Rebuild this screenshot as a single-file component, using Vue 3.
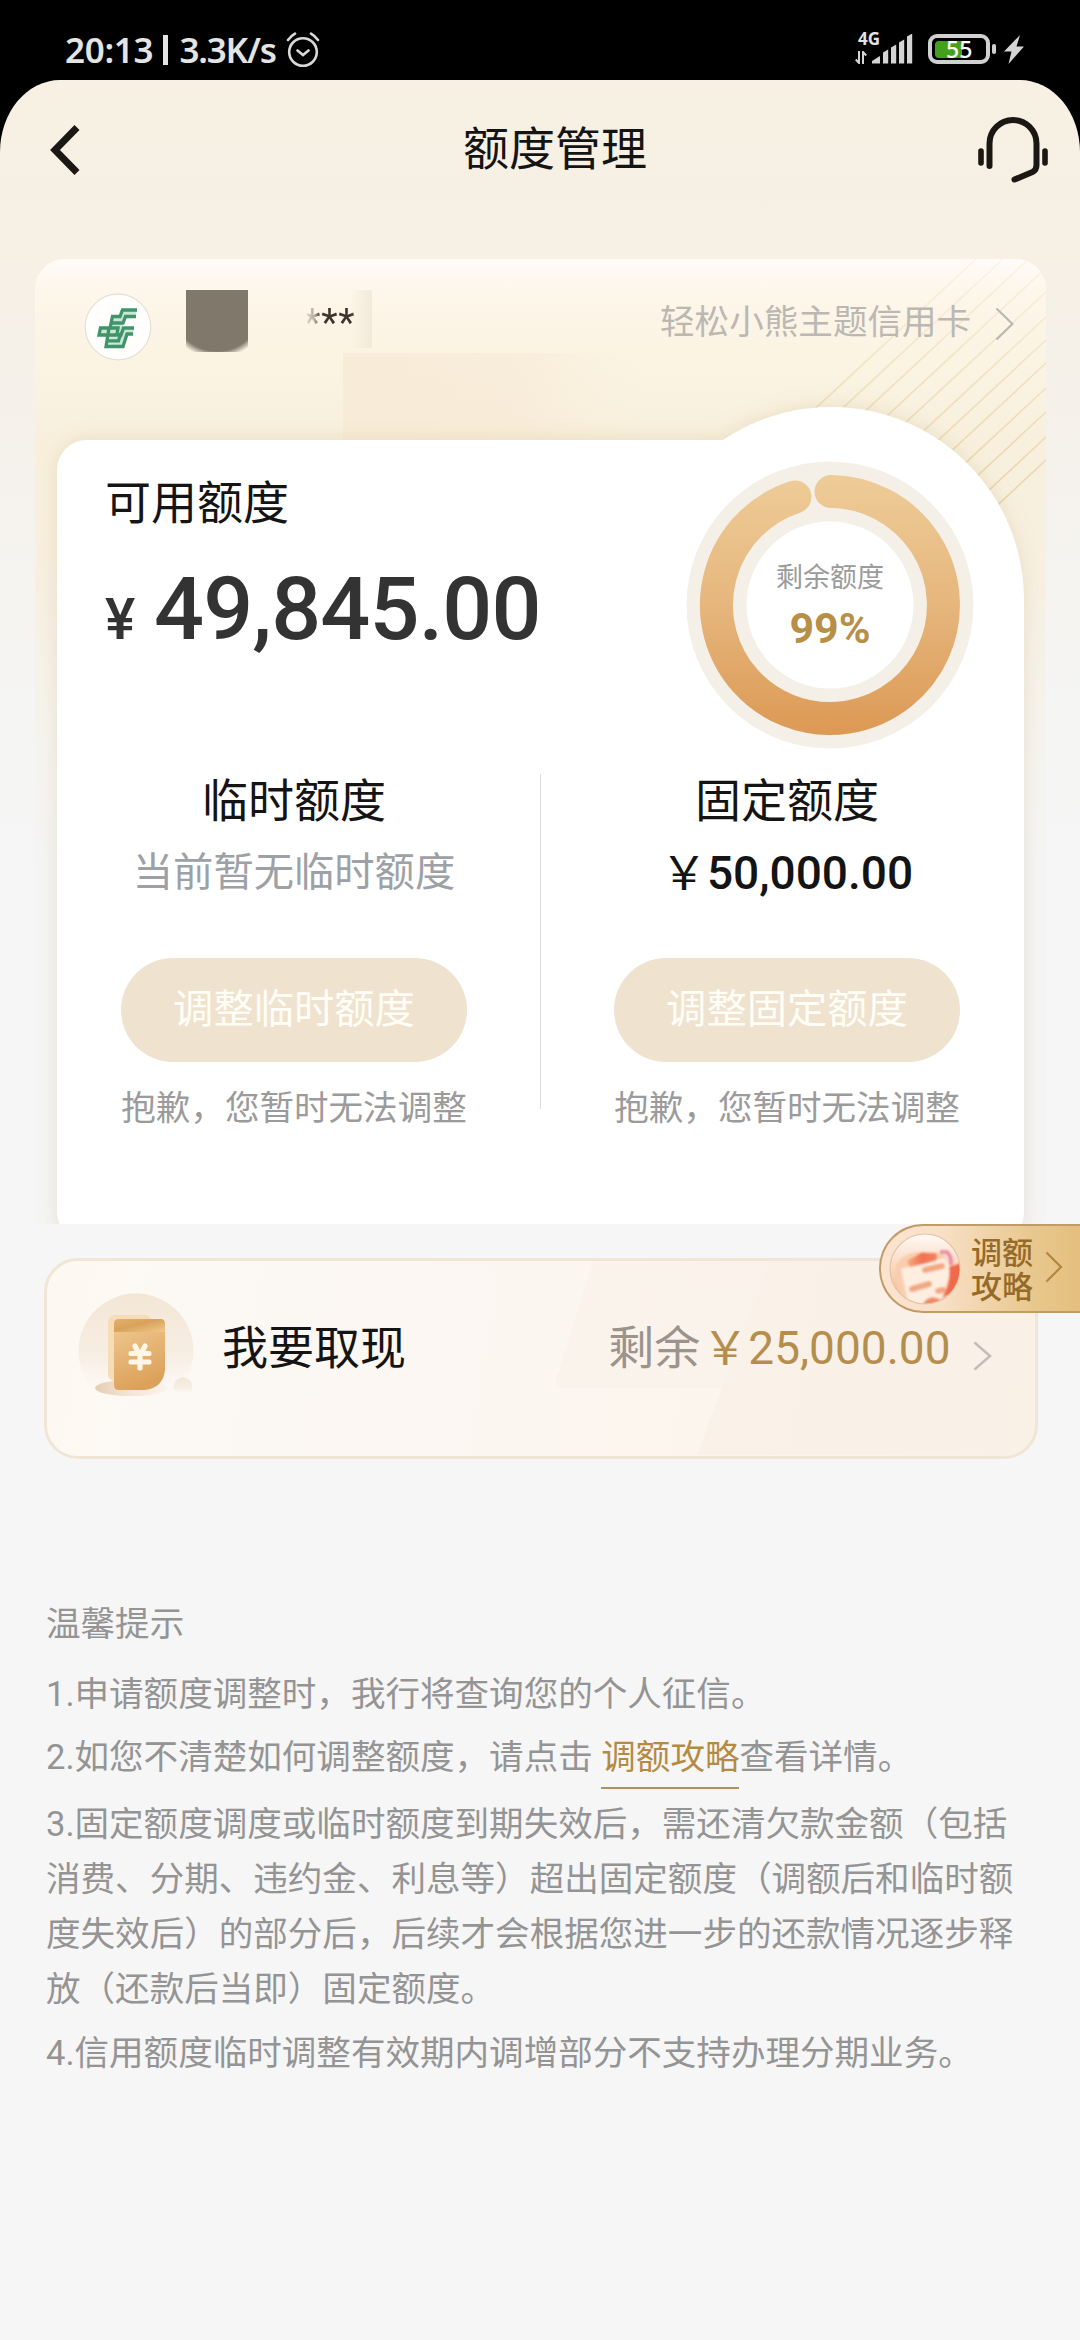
<script setup>
const bars = [
  { x: 0, h: 7 },
  { x: 11, h: 13 },
  { x: 19, h: 18 },
  { x: 27, h: 23 },
  { x: 35, h: 29 }
]
const stripes = [194, 219, 243, 268, 292, 317, 340, 363, 388, 412, 437, 460]
const limits = [
  { title: '临时额度', empty: '当前暂无临时额度', action: '调整临时额度', note: '抱歉，您暂时无法调整' },
  { title: '固定额度', amount: '50,000.00', action: '调整固定额度', note: '抱歉，您暂时无法调整' }
]
</script>

<template>
  <div class="screen">
    <div class="status">
      <div class="status-left">
        <span class="clock">20:13</span><i class="bar"></i><span class="speed">3.3K/s</span>
        <svg width="36" height="36" viewBox="0 0 36 36" fill="none" stroke="#d9d9d9" stroke-width="2.6" stroke-linecap="round">
          <circle cx="18" cy="20" r="13.8" />
          <path d="M12.5 18.500l5.500 4.500 5.500-4.500M3 8q3-4 7-6.300M33 8q-3-4-7-6.300" />
        </svg>
      </div>
      <div class="status-right">
        <div class="network">
          <span class="net-type">4G</span>
          <svg width="12" height="13" viewBox="0 0 12 13" fill="none" stroke="#d4d4d4" stroke-width="2">
            <path d="M4 0V12L0.800 8.500M8 13V1L11.200 4.500" />
          </svg>
        </div>
        <svg class="signal" width="41" height="30" viewBox="0 0 41 30" fill="#d4d4d4">
          <path d="M0 29.500V27L8 22V29.500z" />
          <path v-for="b in bars.slice(1)" :key="b.x" :d="`M${b.x} 29.500V${31.500 - b.h}l5.200-3V29.500z`" />
        </svg>
        <div class="battery"><i class="charge"></i><span>55</span></div>
        <i class="tip"></i>
        <svg class="bolt" width="20" height="29" viewBox="0 0 20 29" fill="#d4d4d4">
          <path d="M16 0L0 16.500h7.500L4.500 29 20 11.500h-7.500z" />
        </svg>
      </div>
    </div>

    <div class="app">
      <header class="nav">
        <svg width="34" height="56" viewBox="0 0 34 56" fill="none" stroke="#1b1814" stroke-width="7">
          <path d="M29 5.500L7 28l22 22.500" />
        </svg>
        <h1>额度管理</h1>
        <svg width="72" height="68" viewBox="0 0 72 68" fill="none" stroke="#1b1814" stroke-width="6" stroke-linecap="round" stroke-linejoin="round">
          <path d="M13.500 50V27.500a23.500 23.500 0 0 1 47 0V49q0 5-4 7L38.500 63.500" />
          <path d="M5 35v12M69 35v12" stroke-width="5.600" />
        </svg>
      </header>

      <section class="card">
        <svg class="card-art" width="1011" height="965" viewBox="35 259 1011 965">
          <defs>
            <linearGradient id="stripe" x1="0" y1="259" x2="0" y2="500" gradientUnits="userSpaceOnUse">
              <stop offset="0" stop-color="#efdfc0" stop-opacity="0.25" />
              <stop offset="0.500" stop-color="#eddcba" stop-opacity="0.800" />
              <stop offset="1" stop-color="#e9d5ab" />
            </linearGradient>
            <linearGradient id="haze" x1="0" x2="1">
              <stop offset="0" stop-color="#f8ead6" stop-opacity="0.750" />
              <stop offset="0.600" stop-color="#f8ead6" stop-opacity="0.600" />
              <stop offset="1" stop-color="#f9ecd9" stop-opacity="0" />
            </linearGradient>
            <filter id="soft" x="-10%" y="-10%" width="120%" height="120%">
              <feDropShadow dx="0" dy="0" stdDeviation="10" flood-color="#a88c4c" flood-opacity="0.200" />
            </filter>
          </defs>
          <rect x="343" y="353" width="300" height="90" fill="url(#haze)" />
          <g stroke="url(#stripe)" stroke-width="1.600">
            <line v-for="y in stripes" :key="y" x1="746" :y1="y + 279" x2="1046" :y2="y" />
          </g>
          <path
            filter="url(#soft)"
            fill="#fff"
            d="M57 470a30 30 0 0 1 30-30H723A193 193 0 0 1 1024 600V1212a30 30 0 0 1-30 30H87a30 30 0 0 1-30-30z"
          />
        </svg>

        <div class="owner">
          <svg class="logo" width="68" height="68" viewBox="0 0 68 68" fill="none">
            <circle cx="34" cy="34" r="32.800" fill="#fffefc" stroke="#e6dfd6" stroke-width="1.200" />
            <path d="M53 17H38.500L36 23.500H28.500L26 35H16.500L15 42H25L22 53H39L42 42H49L50 35H38L40 29.500L41.500 24H51.500z" fill="#8cc7a8" fill-opacity="0.450" />
            <g stroke="#3f946a" stroke-width="3.300">
              <path d="M53 17H38.500L36 23.500H28.500L26 35M52 23.500H41.500L39 30H27.500" />
              <path d="M50 35H39.500L37 42H15L16.500 35H34L33 41M49 41H43L39 53.500H22L25 35" />
              <path d="M24 47.800H34.500L37 40" />
            </g>
          </svg>
          <i class="mask"></i>
          <span class="stars">***</span>
          <i class="smudge"></i>
          <span class="card-name">轻松小熊主题信用卡</span>
          <svg class="card-arrow" width="20" height="34" viewBox="0 0 20 34" fill="none" stroke="#b9b6b0" stroke-width="2">
            <path d="M1.500 1.500L17.500 17 1.500 32.500" />
          </svg>
        </div>

        <div class="panel">
          <div class="summary">
            <div class="available">
              <h2>可用额度</h2>
              <p><span class="yen">¥</span><b>49,845.00</b></p>
            </div>
            <div class="ring">
              <svg width="288" height="288" viewBox="0 0 288 288" fill="none">
                <defs>
                  <linearGradient id="gold" x1="0" y1="14" x2="0" y2="274" gradientUnits="userSpaceOnUse">
                    <stop offset="0" stop-color="#eecc98" />
                    <stop offset="0.500" stop-color="#e6b67d" />
                    <stop offset="1" stop-color="#dc9954" />
                  </linearGradient>
                </defs>
                <circle cx="144" cy="144" r="113.500" stroke="#f4f0e8" stroke-width="60" />
                <path d="M145 30.500A113.500 113.500 0 1 1 109 36" stroke="url(#gold)" stroke-width="33" stroke-linecap="round" />
              </svg>
              <div class="ring-label"><span>剩余额度</span><b>99%</b></div>
            </div>
          </div>
          <div class="limits">
            <div v-for="l in limits" :key="l.title" class="limit">
              <h3>{{ l.title }}</h3>
              <p v-if="l.empty" class="empty">{{ l.empty }}</p>
              <p v-else class="amount"><span>￥</span>{{ l.amount }}</p>
              <button>{{ l.action }}</button>
              <p class="note">{{ l.note }}</p>
            </div>
          </div>
        </div>
      </section>

      <section class="withdraw">
        <svg class="withdraw-art" width="987" height="194" viewBox="47 1261 987 194">
          <defs>
            <linearGradient id="band" x1="0" y1="1261" x2="0" y2="1400" gradientUnits="userSpaceOnUse">
              <stop offset="0" stop-color="#f8ede4" stop-opacity="0.350" />
              <stop offset="1" stop-color="#f8efe8" stop-opacity="0.450" />
            </linearGradient>
          </defs>
          <path d="M593 1261L556 1380q-2 8 6 8H723L770 1261z" fill="url(#band)" />
          <path d="M770 1261L697 1455H1034V1261z" fill="#f9efe5" fill-opacity="0.600" />
        </svg>
        <svg class="cash" width="120" height="120" viewBox="0 0 120 120">
          <defs>
            <linearGradient id="disc" x1="0" y1="0" x2="0" y2="1">
              <stop offset="0" stop-color="#f3e6d5" />
              <stop offset="0.550" stop-color="#f7eee4" />
              <stop offset="0.900" stop-color="#fbf7f3" stop-opacity="0" />
            </linearGradient>
            <linearGradient id="note" x1="0" y1="0" x2="0.300" y2="1">
              <stop offset="0" stop-color="#f0cb94" />
              <stop offset="1" stop-color="#dca25b" />
            </linearGradient>
            <linearGradient id="lid" x1="0" y1="0" x2="1" y2="1">
              <stop offset="0" stop-color="#e3b06a" />
              <stop offset="0.450" stop-color="#d9a25a" />
              <stop offset="1" stop-color="#efc88d" />
            </linearGradient>
            <linearGradient id="shade" x1="0" x2="1">
              <stop offset="0" stop-color="#e3cdb4" />
              <stop offset="1" stop-color="#fbe9da" stop-opacity="0.300" />
            </linearGradient>
          </defs>
          <circle cx="59" cy="60" r="57.500" fill="url(#disc)" />
          <ellipse cx="54" cy="97" rx="36" ry="8" fill="url(#shade)" />
          <circle cx="106" cy="96" r="9.500" fill="url(#disc)" />
          <rect x="31" y="24" width="44" height="66" rx="7" fill="#f7dcb8" />
          <path d="M37 33q0-5 5-5H83q5 0 5 5V79q-2 18-20 20H42q-5 0-5-5z" fill="url(#note)" />
          <path d="M37 33q0-5 5-5H83q5 0 5 5V41H37z" fill="url(#lid)" />
          <path d="M58 55l3 6M68 55l-3 6M54 62.500H72M54 71H72M63 62V77" fill="none" stroke="#fff6e8" stroke-width="5.200" stroke-linecap="round" />
        </svg>
        <h3>我要取现</h3>
        <p><span class="left">剩余</span><span class="sum">￥25,000.00</span></p>
        <svg class="withdraw-arrow" width="19" height="30" viewBox="0 0 19 30" fill="none" stroke="#c6bdb8" stroke-width="2.600">
          <path d="M1.500 1.500L17 15 1.500 28.500" />
        </svg>
      </section>

      <section class="tips">
        <h4>温馨提示</h4>
        <p>1.申请额度调整时，我行将查询您的个人征信。</p>
        <p class="with-link">2.如您不清楚如何调整额度，请点击 <a>调额攻略</a>查看详情。</p>
        <p>3.固定额度调度或临时额度到期失效后，需还清欠款金额（包括消费、分期、违约金、利息等）超出固定额度（调额后和临时额度失效后）的部分后，后续才会根据您进一步的还款情况逐步释放（还款后当即）固定额度。</p>
        <p class="last">4.信用额度临时调整有效期内调增部分不支持办理分期业务。</p>
      </section>
    </div>

    <a class="guide">
      <svg width="72" height="72" viewBox="0 0 72 72">
        <defs>
          <clipPath id="face"><circle cx="36" cy="36" r="34.500" /></clipPath>
          <linearGradient id="faceBg" x1="0" y1="0" x2="0" y2="1">
            <stop offset="0" stop-color="#fffaf6" />
            <stop offset="0.400" stop-color="#fbdcc6" />
            <stop offset="1" stop-color="#f5b189" />
          </linearGradient>
          <linearGradient id="red" x1="0" x2="1">
            <stop offset="0" stop-color="#f5ab80" />
            <stop offset="0.500" stop-color="#f2714e" />
            <stop offset="1" stop-color="#f08560" />
          </linearGradient>
          <filter id="blurry"><feGaussianBlur stdDeviation="0.900" /></filter>
        </defs>
        <circle cx="36" cy="36" r="35" fill="url(#faceBg)" stroke="#e3c4a6" stroke-width="1.200" />
        <g clip-path="url(#face)">
          <g filter="url(#blurry)">
            <path d="M7 32q8-14 28-13l18 1q6 3 6 13l12-3V50L54 74H16L7 50z" fill="#f9cdb0" />
            <path d="M12 36L56 25 62 38 52 66 20 74z" fill="#fdeee0" />
            <path d="M19 27L27 23q5-5 11-3l9 0q3 5-1 8L22 34q-5-3-3-7z" fill="url(#red)" />
            <path d="M51 19h7q5 5 4 13" fill="none" stroke="#e889a0" stroke-width="3.600" />
            <path d="M60 34L72 30V52Q64 62 54 64q8-14 6-30z" fill="#f0694a" />
            <g stroke="#f2a982" stroke-width="6" stroke-linecap="round">
              <path d="M36 37L53 33M23 56L40 51M49 58L54 57" />
            </g>
            <path d="M34 71q5-10 17-5l-4 8z" fill="#f28b63" />
          </g>
        </g>
      </svg>
      <span>调额<br />攻略</span>
      <svg width="18" height="32" viewBox="0 0 18 32" fill="none" stroke="#b3873f" stroke-width="2.200">
        <path d="M1.500 1.500L16 16 1.500 30.500" />
      </svg>
    </a>
  </div>
</template>

<style>
body {
  margin: 0;
  background: #000;
}
</style>

<style scoped>
.screen {
  position: relative;
  width: 1080px;
  height: 2340px;
  overflow: hidden;
  background: #000;
  font-family: Roboto, "Noto Sans CJK SC", sans-serif;
  color: #141414;
}
h1, h2, h3, h4, p {
  margin: 0;
  font-weight: 400;
}
i {
  display: block;
  flex: none;
}
svg {
  display: block;
  flex: none;
}

/* status bar */
.status {
  height: 80px;
  display: flex;
  justify-content: space-between;
  color: #e4e4e4;
  font-family: "Noto Sans", "Open Sans", sans-serif;
}
.status-left {
  display: flex;
  align-items: center;
  height: 99px;
  padding-left: 65px;
  font-size: 35px;
  font-weight: 600;
}
.status-left svg {
  margin-left: 9px;
}
.clock {
  width: 88px;
  letter-spacing: -0.300px;
}
.bar {
  width: 4.500px;
  height: 30px;
  margin: 0 12px 0 10px;
  background: #e4e4e4;
}
.speed {
  width: 96px;
  letter-spacing: -1.200px;
}
.status-right {
  display: flex;
  padding-right: 56px;
}
.network {
  padding-top: 32px;
  width: 17px;
}
.net-type {
  display: block;
  margin-left: 3px;
  height: 19px;
  font-size: 17px;
  line-height: 13px;
  font-weight: 700;
  white-space: nowrap;
}
.signal {
  margin-top: 33.500px;
}
.battery {
  box-sizing: border-box;
  display: flex;
  align-items: center;
  width: 62px;
  height: 30px;
  margin: 34px 0 0 15px;
  padding-left: 3px;
  border: 4px solid #d0d0d0;
  border-radius: 9px;
}
.charge {
  width: 27px;
  height: 17px;
  border-radius: 4px 0 0 4px;
  background: #43a01c;
}
.battery span {
  margin-left: -16px;
  font-size: 23px;
  line-height: 22px;
  font-weight: 500;
  color: #fff;
}
.tip {
  width: 4px;
  height: 10px;
  margin: 44px 0 0 2px;
  border-radius: 2px;
  background: #d0d0d0;
}
.bolt {
  margin: 35px 0 0 8px;
}

/* page */
.app {
  box-sizing: border-box;
  height: 2260px;
  border-radius: 60px 60px 0 0 / 72px 72px 0 0;
  background: linear-gradient(#f7f0e3 0, #f6f0e5 170px, #f5f1ea 330px, #f5f5f4 620px, #f6f6f6 800px);
}
.nav {
  display: flex;
  justify-content: space-between;
  align-items: center;
  height: 140px;
  padding: 0 32px 0 48px;
}
.nav h1 {
  margin-left: 52px;
  font-size: 46px;
  line-height: 60px;
  padding-bottom: 3px;
}

/* card */
.card {
  position: relative;
  width: 1011px;
  height: 965px;
  margin: 39px 0 0 35px;
  overflow: hidden;
  border-radius: 30px 30px 0 0;
  background: linear-gradient(#fffbf8 0, #fdf6ea 34px, #fbf4e3 95px, #f8f0dd 180px, #f8f0e0 300px, #f6f4ef 480px, #f5f5f5 600px);
}
.card-art {
  position: absolute;
  left: 0;
  top: 0;
}
.owner {
  position: relative;
  display: flex;
  align-items: flex-start;
  height: 181px;
}
.logo {
  margin: 34px 0 0 49px;
}
.mask {
  width: 62px;
  height: 62px;
  margin: 31px 0 0 34px;
  background: radial-gradient(circle at 50% 26%, #80786b 45px, transparent 52px);
}
.stars {
  width: 52px;
  margin: 42px 0 0 56px;
  font-size: 38px;
  line-height: 44px;
  letter-spacing: 0.800px;
  background: linear-gradient(90deg, transparent 2px, #cfc7b8 5px, #b5ac9e 11px, #3d352d 16px);
  -webkit-background-clip: text;
  background-clip: text;
  color: transparent;
}
.smudge {
  width: 22px;
  height: 58px;
  margin: 31px 0 0 -6px;
  background: linear-gradient(90deg, transparent, #f2e9d9);
}
.card-name {
  margin: 38px 0 0 288px;
  font-size: 34.600px;
  line-height: 50px;
  color: #bbb8b3;
}
.card-arrow {
  margin: 48px 0 0 24px;
}
.panel {
  position: relative;
  margin-left: 22px;
  width: 967px;
}
.summary {
  display: flex;
  justify-content: space-between;
  height: 334px;
}
.available {
  padding: 33px 0 0 48px;
}
.available h2 {
  font-size: 46px;
  line-height: 60px;
}
.available p {
  display: flex;
  align-items: baseline;
  margin-top: 26px;
  line-height: 100px;
  color: #333;
}
.yen {
  width: 49px;
  font-size: 57px;
  font-weight: 500;
}
.available b {
  font-size: 88px;
  font-weight: 500;
  letter-spacing: -0.850px;
}
.ring {
  display: grid;
  width: 288px;
  height: 288px;
  margin: 21px 50px 0 0;
}
.ring > * {
  grid-area: 1 / 1;
}
.ring-label {
  display: flex;
  flex-direction: column;
  align-items: center;
  padding-top: 97px;
}
.ring-label span {
  font-size: 27px;
  line-height: 40px;
  color: #9b9b9b;
}
.ring-label b {
  margin-top: 5px;
  font-size: 43px;
  line-height: 50px;
  color: #b88f47;
}
.limits {
  display: flex;
  height: 335px;
}
.limit {
  box-sizing: border-box;
  display: flex;
  flex-direction: column;
  align-items: center;
  width: 483px;
  padding-right: 9px;
}
.limit > * {
  flex: none;
}
.limit + .limit {
  width: 484px;
  padding: 0 0 0 9px;
  border-left: 1.500px solid #dcdcdc;
}
.limit h3 {
  margin-top: -3px;
  font-size: 46px;
  line-height: 60px;
}
.limit .empty,
.limit .amount {
  height: 60px;
  margin-top: 12px;
  font-size: 40.300px;
  line-height: 60px;
  color: #9da1a6;
}
.limit .amount {
  font-size: 46px;
  font-weight: 500;
  color: #141414;
}
.amount span {
  font-weight: 400;
}
.limit button {
  width: 346px;
  height: 104px;
  margin-top: 55px;
  padding: 0 0 9px;
  border: 0;
  border-radius: 52px;
  background: #efe2cf;
  color: #fffdf6;
  font: inherit;
  font-size: 40.300px;
}
.limit .note {
  margin-top: 21px;
  font-size: 34.560px;
  line-height: 50px;
  color: #9b9b9b;
}

/* cash withdrawal */
.withdraw {
  position: relative;
  box-sizing: border-box;
  display: flex;
  width: 994px;
  height: 201px;
  margin: 34px 0 0 43.500px;
  overflow: hidden;
  border: 3px solid #f0e6d5;
  border-radius: 34px;
  background: linear-gradient(100deg, #fdf9f2 0, #fbf7f3 25%, #fcf6ef 60%, #faf2e9 100%);
}
.withdraw-art {
  position: absolute;
  left: 0;
  top: 0;
}
.cash {
  position: relative;
  margin: 30px 0 0 30.500px;
}
.withdraw h3 {
  position: relative;
  margin: 57px 0 0 25px;
  font-size: 46px;
  line-height: 60px;
}
.withdraw p {
  position: relative;
  display: flex;
  margin: 57px 0 0 auto;
  font-size: 46px;
  line-height: 60px;
}
.left {
  margin-right: 2px;
  color: #9c938d;
}
.sum {
  color: #b58e4d;
}
.withdraw-arrow {
  position: relative;
  margin: 80px 43px 0 22px;
}

/* floating shortcut pinned to the right edge */
.guide {
  position: absolute;
  right: 0;
  top: 1224px;
  box-sizing: border-box;
  display: flex;
  align-items: center;
  width: 201px;
  height: 89px;
  padding-left: 8px;
  border: 2px solid #bf9c68;
  border-right: 0;
  border-radius: 44px 0 0 44px;
  background: linear-gradient(90deg, #fce3d0 0, #f8e0c6 30%, #e9c88f 75%, #e4bf7e 100%);
}
.guide span {
  margin: 5px 12px 0 10px;
  font-size: 31px;
  line-height: 34.500px;
  font-weight: 500;
  color: #966a28;
}
.guide svg:last-child {
  margin-bottom: 3px;
}

/* tips */
.tips {
  width: 972px;
  margin: 140px 0 0 46px;
  color: #949494;
  font-size: 34.560px;
  line-height: 55px;
}
.tips h4 {
  font-size: 34.560px;
  line-height: 50px;
  margin-bottom: 18px;
}
.tips p {
  margin-bottom: 9px;
}
.tips p:first-of-type {
  margin-bottom: 8px;
}
.tips .with-link {
  margin-bottom: 12px;
}
.tips a {
  display: inline-block;
  height: 59px;
  margin-bottom: -4px;
  box-sizing: border-box;
  border-bottom: 2px solid #b3935c;
  color: #b58a42;
  vertical-align: top;
}
</style>
